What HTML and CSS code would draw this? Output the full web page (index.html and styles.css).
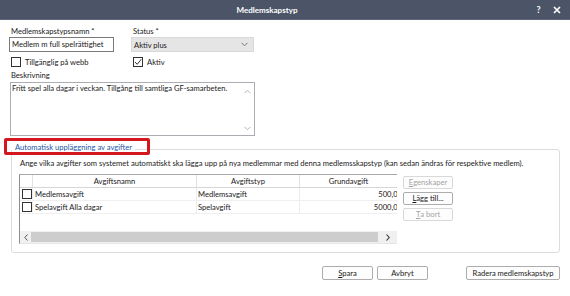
FILE: index.html
```html
<!DOCTYPE html>
<html lang="sv">
<head>
<meta charset="utf-8">
<title>Medlemskapstyp</title>
<link rel="stylesheet" href="styles.css">
</head>
<body>
<div class="window">
  <div class="titlebar">
    <span class="title">Medlemskapstyp</span>
    <span class="tb-btn help">?</span>
    <span class="tb-btn close"><svg width="8" height="8" viewBox="0 0 8 8"><path d="M1 1L7 7M7 1L1 7" stroke="#fff" stroke-width="1.7" fill="none"/></svg></span>
  </div>
  <div class="content">
    <div class="row1">
      <div class="col-name">
        <div class="label">Medlemskapstypsnamn *</div>
        <div class="input">Medlem m full spelrättighet</div>
      </div>
      <div class="col-status">
        <div class="label">Status *</div>
        <div class="select"><span>Aktiv plus</span><svg width="7" height="5" viewBox="0 0 7 5"><path d="M0.5 0.8L3.5 3.8L6.5 0.8" stroke="#777" stroke-width="1" fill="none"/></svg></div>
      </div>
    </div>
    <div class="row2">
      <div class="check col-name"><span class="box"></span><span>Tillgänglig på webb</span></div>
      <div class="check col-status"><span class="box"><svg width="8" height="8" viewBox="0 0 8 8"><path d="M1 4L3.2 6.3L7.2 1.3" stroke="#333" stroke-width="1" fill="none"/></svg></span><span>Aktiv</span></div>
    </div>
    <div class="label label-desc">Beskrivning</div>
    <div class="textarea">
      <div class="ta-text">Fritt spel alla dagar i veckan. Tillgång till samtliga GF-samarbeten.</div>
      <div class="ta-scroll">
        <svg width="7" height="5" viewBox="0 0 7 5"><path d="M0.5 4.2L3.5 1.2L6.5 4.2" stroke="#b5b5b5" stroke-width="1" fill="none"/></svg>
        <svg width="7" height="5" viewBox="0 0 7 5"><path d="M0.5 0.8L3.5 3.8L6.5 0.8" stroke="#b5b5b5" stroke-width="1" fill="none"/></svg>
      </div>
    </div>
    <div class="group">
      <div class="legend">Automatisk uppläggning av avgifter</div>
      <div class="highlight"></div>
      <div class="group-desc">Ange vilka avgifter som systemet automatiskt ska lägga upp på nya medlemmar med denna medlemsskapstyp (kan sedan ändras för respektive medlem).</div>
      <div class="group-body">
        <div class="grid">
          <div class="grid-head">
            <div class="hcell"></div>
            <div class="hcell">Avgiftsnamn</div>
            <div class="hcell">Avgiftstyp</div>
            <div class="hcell">Grundavgift</div>
          </div>
          <div class="grid-row">
            <div class="cell cell-check"><span class="box"></span></div>
            <div class="cell cell-name">Medlemsavgift</div>
            <div class="cell cell-type">Medlemsavgift</div>
            <div class="cell cell-num"><span>500,00</span></div>
          </div>
          <div class="grid-row">
            <div class="cell cell-check"><span class="box"></span></div>
            <div class="cell cell-name">Spelavgift Alla dagar</div>
            <div class="cell cell-type">Spelavgift</div>
            <div class="cell cell-num"><span>5000,00</span></div>
          </div>
          <div class="grid-fill"></div>
          <div class="hscroll">
            <div class="hs-arrow"><svg width="4" height="7" viewBox="0 0 4 7"><path d="M3.5 0.5L0.8 3.5L3.5 6.5" stroke="#555" stroke-width="1" fill="none"/></svg></div>
            <div class="hs-thumb"></div>
            <div class="hs-arrow hs-right"><svg width="4" height="7" viewBox="0 0 4 7"><path d="M0.5 0.5L3.2 3.5L0.5 6.5" stroke="#333" stroke-width="1.1" fill="none"/></svg></div>
          </div>
        </div>
        <div class="side-buttons">
          <div class="btn disabled"><u>E</u>genskaper</div>
          <div class="btn"><u>L</u>ägg till...</div>
          <div class="btn disabled"><u>T</u>a bort</div>
        </div>
      </div>
    </div>
    <div class="footer">
      <div class="btn btn-save"><u>S</u>para</div>
      <div class="btn btn-cancel">Avbryt</div>
      <div class="btn btn-delete">Radera medlemskapstyp</div>
    </div>
  </div>
</div>
</body>
</html>
```

FILE: styles.css
```css
* { box-sizing: border-box; }
html, body { margin: 0; padding: 0; background: #fff; }
body {
  font-family: Lato, "Noto Sans", sans-serif;
  font-size: 7.6px;
  color: #1a1a1a;
}
.window { width: 570px; height: 296px; background: #fff; overflow: hidden; }

.titlebar {
  height: 20px;
  background: #4b5567;
  color: #fff;
  display: flex;
  align-items: center;
  border-bottom: 1px solid #5d6777;
}
.title { width: 534px; text-align: center; font-weight: bold; font-size: 8px; }
.tb-btn { display: flex; justify-content: center; align-items: center; font-weight: bold; }
.help { width: 9px; font-size: 9px; }
.close { width: 19px; margin-left: 4px; }

.content { padding: 0 10px 0 9px; }

.row1 { display: flex; margin-top: 6px; }
.col-name { width: 105px; margin-right: 17px; }
.col-status { width: 123px; }
.label { height: 10px; line-height: 10px; padding-left: 2px; white-space: nowrap; }
.input {
  margin-top: 1px; height: 15px;
  border: 1px solid #7a7a7a;
  line-height: 13px; padding-left: 2px;
  white-space: nowrap;
}
.select {
  margin-top: 1px; height: 15px;
  background: #e5e5e5; border: 1px solid #d9d9d9;
  display: flex; align-items: center; justify-content: space-between;
  padding: 0 5px 0 2px;
}

.row2 { display: flex; margin-top: 5px; height: 10px; }
.check { display: flex; align-items: center; gap: 4px; padding-left: 2px; line-height: 10px; white-space: nowrap; }
.box {
  width: 10px; height: 10px; border: 1px solid #333; background: #fff;
  display: inline-flex; align-items: center; justify-content: center; flex: none;
}

.label-desc { margin-top: 3px; }
.textarea {
  margin-top: 2px; margin-left: 1px;
  width: 245px; height: 54px;
  border: 1px solid #abadb3;
  display: flex;
}
.ta-text { flex: 1; padding: 0 0 0 1px; line-height: 10px; }
.ta-scroll {
  width: 14px; display: flex; flex-direction: column;
  justify-content: space-between; align-items: center;
  padding: 6px 0 4px;
}

.group {
  margin-top: 13px; margin-left: 2px;
  height: 104px;
  border: 1px solid #dcdcdc; border-radius: 3px;
  position: relative;
  padding: 8px 0 0 7px;
}
.legend {
  position: absolute; top: -8px; left: 0;
  padding: 0 3px; background: #fff;
  color: #2456a4; line-height: 10px; white-space: nowrap;
}
.highlight {
  position: absolute; left: -8px; top: -12px;
  width: 146px; height: 17px;
  border: 3px solid #d3171c; border-radius: 2px;
}
.group-desc { line-height: 10px; margin-left: 1px; white-space: nowrap; }
.group-body { display: flex; margin-top: 6px; gap: 6px; }

.grid {
  width: 378px; height: 70px;
  border-left: 1px solid #8e8e8e; border-top: 1px solid #a8a8a8;
  border-bottom: 1px solid #e6e6e6;
  display: flex; flex-direction: column;
}
.grid-head, .grid-row { display: grid; grid-template-columns: 13px 164px 103px 97px; }
.grid-head { height: 13px; border-bottom: 1px solid #d6d6d6; }
.hcell { border-right: 1px solid #e2e2e2; text-align: center; line-height: 12px; }
.hcell:last-child { border-right: none; }
.grid-row { height: 13px; border-bottom: 1px solid #efefef; }
.cell { border-right: 1px solid #ececec; line-height: 12px; white-space: nowrap; overflow: hidden; }
.cell:last-child { border-right: none; }
.cell-check { display: flex; align-items: center; padding-left: 2px; }
.cell-name { padding-left: 2px; }
.cell-type { padding-left: 1px; }
.cell-num { display: flex; justify-content: flex-end; }
.cell-num span { margin-right: -5px; }
.grid-fill { flex: 1; }
.hscroll { height: 12px; display: flex; background: #f0f0f0; }
.hs-arrow { width: 11px; display: flex; align-items: center; justify-content: center; }
.hs-thumb { width: 347px; background: #cdcdcd; margin: 1px 0; }
.hs-right { flex: 1; }

.side-buttons { display: flex; flex-direction: column; gap: 3px; margin-top: 2px; width: 50px; }
.btn {
  height: 13px; border: 1px solid #adadad; border-radius: 2px; background: #fdfdfd;
  display: flex; align-items: center; justify-content: center;
  white-space: nowrap; line-height: 11px;
}
.btn.disabled { color: #a3a3a3; border-color: #d9d9d9; }
u { text-decoration-thickness: 1px; text-underline-offset: 1px; }

.footer { display: flex; justify-content: flex-end; margin-top: 13px; }
.footer .btn { height: 14px; }
.btn-save { width: 51px; }
.btn-cancel { width: 51px; margin-left: 4px; }
.btn-delete { width: 94px; margin-left: 38px; }
```
